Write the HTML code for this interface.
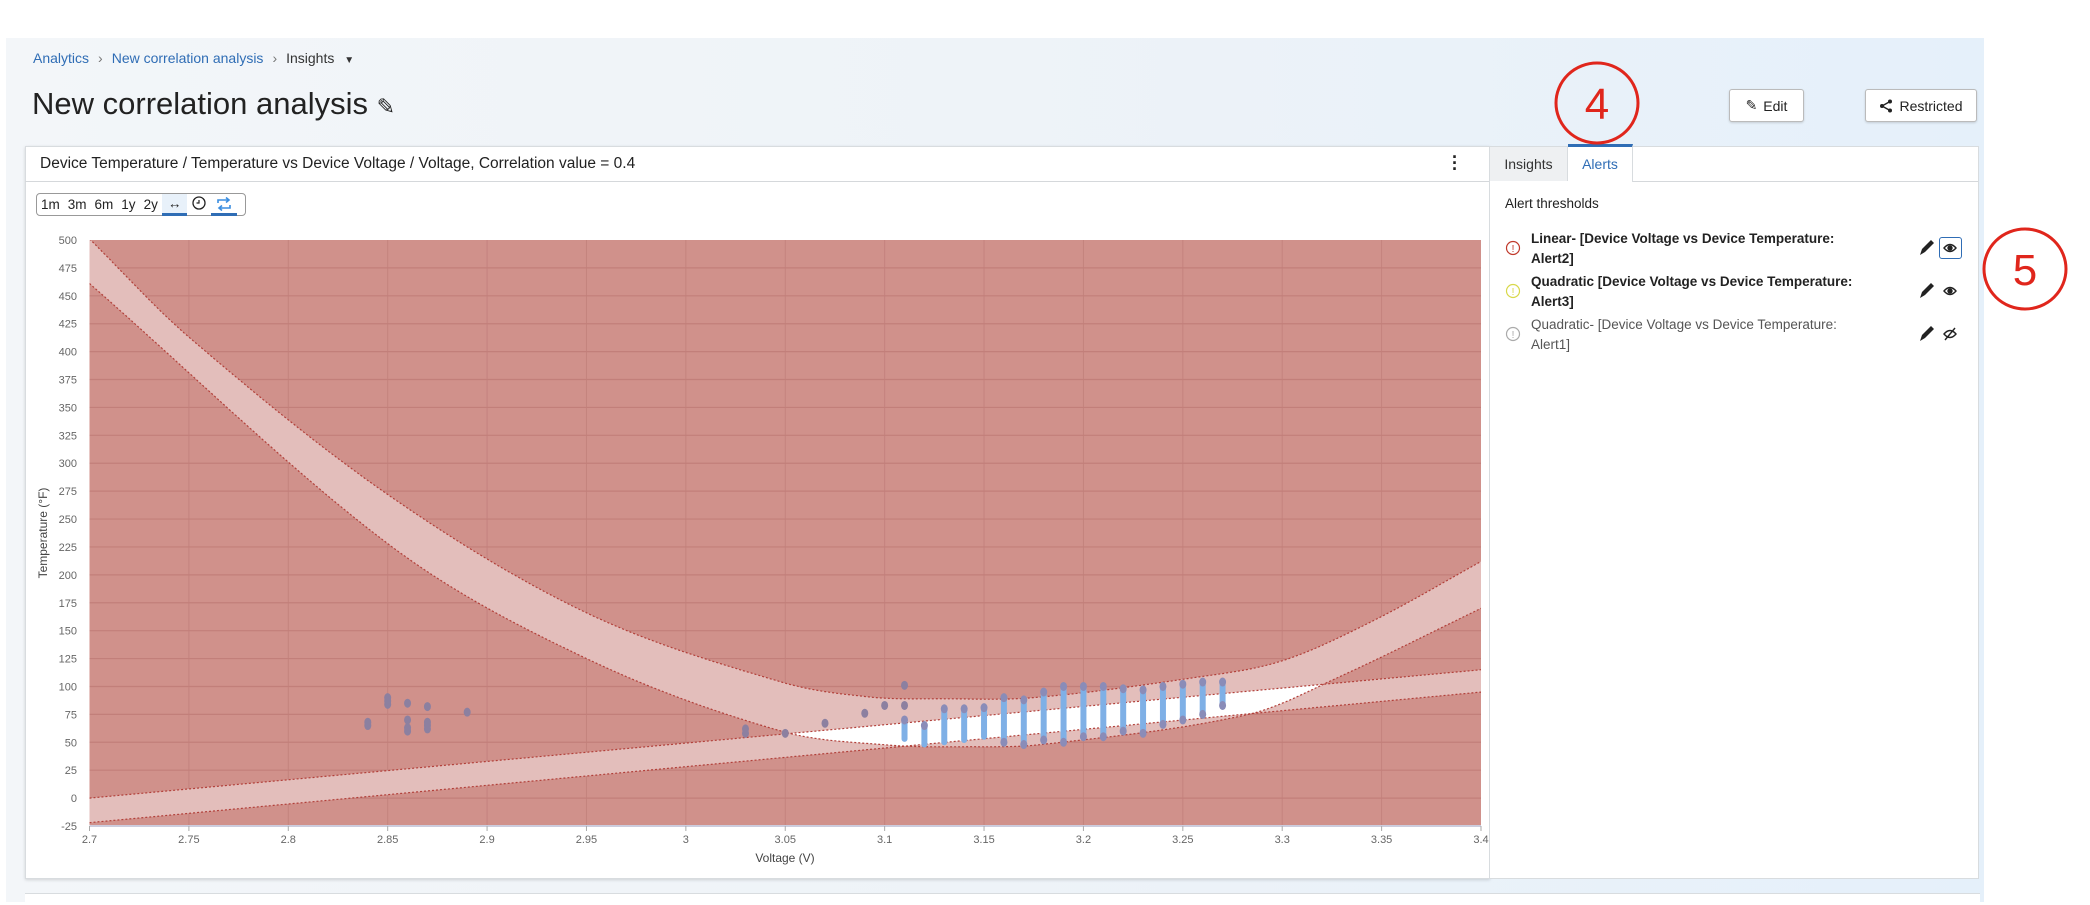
<!DOCTYPE html>
<html><head><meta charset="utf-8">
<style>
*{box-sizing:border-box;margin:0;padding:0}
body{width:2090px;height:902px;overflow:hidden;background:#fff;font-family:"Liberation Sans",sans-serif;color:#222;position:relative}
.bg{position:absolute;left:6px;top:38px;width:1978px;height:864px;background:linear-gradient(90deg,#f3f6f9 0%,#eef3f8 50%,#e5f0fa 100%)}
.abs{position:absolute}
.bc{left:33px;top:50px;font-size:14px;color:#333;white-space:nowrap}
.bc a{color:#2f6db5;text-decoration:none}
.bc .sep{color:#777;margin:0 9px}
.title{left:32px;top:86px;font-size:31px;font-weight:300;color:#222}
.btn{background:#fff;border:1px solid #bbb;border-radius:3px;font-size:14px;height:33px;display:flex;align-items:center;justify-content:center;gap:6px;box-shadow:0 1px 2px rgba(0,0,0,.15)}
.card{background:#fff;border:1px solid #d8dcdf}
.tb{left:36px;top:193px;width:210px;height:23px;border:1px solid #999;border-radius:4px;background:#fff;font-size:13.5px;display:flex;align-items:center}
.tb span{padding:0 4px}
</style></head><body>
<div class="bg"></div>
<div class="abs bc"><a>Analytics</a><span class="sep">&#x203A;</span><a>New correlation analysis</a><span class="sep">&#x203A;</span>Insights <span style="font-size:10px;margin-left:6px">&#9660;</span></div>
<div class="abs title">New correlation analysis <span style="font-size:22px">&#x270E;</span></div>

<div class="abs btn" style="left:1729px;top:89px;width:75px"><span>&#x270E;</span>Edit</div>
<div class="abs btn" style="left:1865px;top:89px;width:112px">
<svg width="14" height="14" viewBox="0 0 14 14"><circle cx="11" cy="2.5" r="2" fill="#222"/><circle cx="3" cy="7" r="2" fill="#222"/><circle cx="11" cy="11.5" r="2" fill="#222"/><path d="M11 2.5L3 7L11 11.5" stroke="#222" stroke-width="1.4" fill="none"/></svg>Restricted</div>

<div class="abs card" style="left:25px;top:146px;width:1465px;height:733px;box-shadow:0 1px 3px rgba(0,0,0,.15)"></div>
<div class="abs" style="left:25px;top:181px;width:1465px;height:1px;background:#d5d8db"></div>
<div class="abs" style="left:40px;top:155px;font-size:15.5px;color:#222">Device Temperature / Temperature vs Device Voltage / Voltage, Correlation value = 0.4</div>
<div class="abs" style="left:1452px;top:154px;font-size:18px;font-weight:bold;line-height:6px">·<br>·<br>·</div>
<div class="abs tb"><span>1m</span><span>3m</span><span>6m</span><span>1y</span><span>2y</span>
<span style="background:#e8f1fa;border-bottom:3px solid #2f6db5;height:22px;line-height:19px;padding:0 6px">&#x2194;</span>
<span style="padding:0 5px"><svg width="14" height="14"><circle cx="7" cy="7" r="6" stroke="#222" stroke-width="1.3" fill="none"/><path d="M7 4V7H4.5" stroke="#222" stroke-width="1.2" fill="none"/></svg></span>
<span style="border-bottom:3px solid #2f6db5;height:22px;padding:3px 5px 0"><svg width="16" height="14"><path d="M2 6V3H13M10 0.5L13 3L10 5.5M14 8V11H3M6 8.5L3 11L6 13.5" stroke="#3b8ee0" stroke-width="1.6" fill="none"/></svg></span>
</div>

<svg class="abs" style="left:0;top:0" width="1490" height="880" id="ch" font-family="Liberation Sans, sans-serif"></svg>

<div class="abs card" style="left:1489px;top:146px;width:490px;height:733px"></div>
<div class="abs" style="left:1490px;top:147px;width:78px;height:34px;background:#eef0f2;border-right:1px solid #d8dcdf;font-size:14px;text-align:center;line-height:34px;color:#333">Insights</div>
<div class="abs" style="left:1568px;top:144px;width:65px;height:38px;background:#fff;border-top:3px solid #2f6db5;border-right:1px solid #d8dcdf;font-size:14px;text-align:center;line-height:34px;color:#2f6db5">Alerts</div>
<div class="abs" style="left:1633px;top:181px;width:345px;height:1px;background:#d5d8db"></div>
<div class="abs" style="left:1505px;top:196px;font-size:13.5px;color:#222">Alert thresholds</div>

<div class="abs" style="left:1531px;top:229px;font-size:13.5px;font-weight:bold;line-height:19.5px;color:#222">Linear- [Device Voltage vs Device Temperature:<br>Alert2]</div>
<div class="abs" style="left:1531px;top:272px;font-size:13.5px;font-weight:bold;line-height:19.5px;color:#222">Quadratic [Device Voltage vs Device Temperature:<br>Alert3]</div>
<div class="abs" style="left:1531px;top:315px;font-size:13.5px;line-height:19.5px;color:#555">Quadratic- [Device Voltage vs Device Temperature:<br>Alert1]</div>
<svg class="abs" style="left:1505px;top:235px" width="16" height="120">
<circle cx="8" cy="13" r="6.5" fill="none" stroke="#c0392b" stroke-width="1.2"/><text x="8" y="17" font-size="10" text-anchor="middle" fill="#c0392b">!</text>
<circle cx="8" cy="56" r="6.5" fill="none" stroke="#d8d84a" stroke-width="1.2"/><text x="8" y="60" font-size="10" text-anchor="middle" fill="#d8d84a">!</text>
<circle cx="8" cy="99" r="6.5" fill="none" stroke="#aaa" stroke-width="1.2"/><text x="8" y="103" font-size="10" text-anchor="middle" fill="#aaa">!</text>
</svg>
<div class="abs" style="left:1939px;top:237px;width:23px;height:22px;border:1px solid #2f6db5;border-radius:3px"></div>
<svg class="abs" style="left:1915px;top:236px" width="50" height="110">
<g fill="#222">
<path d="M5 19L7 13L16 4L19 7L10 16Z"/><path d="M5 62L7 56L16 47L19 50L10 59Z"/><path d="M5 105L7 99L16 90L19 93L10 102Z"/>
</g>
<g stroke="#222" stroke-width="1.4" fill="none">
<path d="M29 12Q35 5 41 12Q35 19 29 12Z"/><circle cx="35" cy="12" r="2" fill="#222"/>
<path d="M29 55Q35 48 41 55Q35 62 29 55Z"/><circle cx="35" cy="55" r="2" fill="#222"/>
<path d="M29 98Q35 91 41 98Q35 105 29 98Z"/><path d="M30 104L40 92"/>
</g></svg>

<div class="abs" style="left:25px;top:893px;width:1955px;height:12px;background:#fff;border-top:1px solid #d8dcdf"></div>

<svg class="abs" style="left:0;top:0" width="2090" height="902">
<ellipse cx="1597" cy="103" rx="41" ry="40" fill="none" stroke="#e0261c" stroke-width="3"/>
<text x="1597" y="119" font-size="44" text-anchor="middle" fill="#e0261c" font-family="Liberation Sans">4</text>
<ellipse cx="2025" cy="269" rx="41" ry="40" fill="none" stroke="#e0261c" stroke-width="3"/>
<text x="2025" y="285" font-size="44" text-anchor="middle" fill="#e0261c" font-family="Liberation Sans">5</text>
</svg>

<script>
var X0=89.5,X1=1481,Y0=240,Y1=826;
function px(v){return X0+(v-2.7)/0.7*(X1-X0)}
function py(t){return Y1-(t+25)/525*(Y1-Y0)}
function spline(pts){return function(v){
 var n=pts.length;if(v<=pts[0][0])return pts[0][1];if(v>=pts[n-1][0])return pts[n-1][1];
 var i=0;while(pts[i+1][0]<v)i++;
 function m(k){var a=pts[Math.max(k-1,0)],b=pts[Math.min(k+1,n-1)];return (b[1]-a[1])/(b[0]-a[0]);}
 var x0=pts[i][0],x1=pts[i+1][0],h=x1-x0,t=(v-x0)/h,y0=pts[i][1],y1=pts[i+1][1],m0=m(i)*h,m1=m(i+1)*h;
 var t2=t*t,t3=t2*t;return (2*t3-3*t2+1)*y0+(t3-2*t2+t)*m0+(-2*t3+3*t2)*y1+(t3-t2)*m1;}}
var qu=spline([[2.7,501],[2.75,413],[2.85,272],[2.95,166],[3.048,104],[3.093,90.5],[3.13,89],[3.175,90],[3.256,108],[3.3,123],[3.347,160],[3.4,212]]);
var ql=spline([[2.7,461],[2.85,228],[2.95,125],[3.048,60],[3.102,47.5],[3.14,46],[3.179,48],[3.283,75],[3.328,108],[3.4,170]]);
function lu(v){return 0+(v-2.7)/0.7*115}
function ll(v){return -22+(v-2.7)/0.7*117}
var s='<defs><clipPath id="pc"><rect x="'+X0+'" y="'+Y0+'" width="'+(X1-X0)+'" height="'+(Y1-Y0)+'"/></clipPath>';
function band(fu,fl){var a=[],b=[];for(var i=0;i<=280;i++){var v=2.7+i*0.0025;a.push(px(v).toFixed(1)+','+py(fu(v)).toFixed(1));b.unshift(px(v).toFixed(1)+','+py(fl(v)).toFixed(1));}return 'M'+a.join('L')+'L'+b.join('L')+'Z'}
function line(f){var a=[];for(var i=0;i<=280;i++){var v=2.7+i*0.0025;a.push(px(v).toFixed(1)+','+py(f(v)).toFixed(1));}return 'M'+a.join('L')}
var qb=band(qu,ql),lb=band(lu,ll);
s+='<clipPath id="lc"><path d="'+lb+'"/></clipPath></defs>';
s+='<g clip-path="url(#pc)"><rect x="'+X0+'" y="'+Y0+'" width="'+(X1-X0)+'" height="'+(Y1-Y0)+'" fill="#d0918b"/>';
for(var i=1;i<14;i++){var x=px(2.7+i*0.05);s+='<line x1="'+x+'" y1="'+Y0+'" x2="'+x+'" y2="'+Y1+'" stroke="#c4837e" stroke-width="1"/>';}
for(var t=0;t<=475;t+=25){var y=py(t);s+='<line x1="'+X0+'" y1="'+y+'" x2="'+X1+'" y2="'+y+'" stroke="#c27f7a" stroke-width="1.2"/>';}
s+='<path d="'+qb+'" fill="#e3bebb"/><path d="'+lb+'" fill="#e3bebb"/>';
s+='<path d="'+qb+'" fill="#fff" clip-path="url(#lc)"/>';
[qu,ql,lu,ll].forEach(function(f){s+='<path d="'+line(f)+'" fill="none" stroke="#b2403a" stroke-width="1.2" stroke-dasharray="2,2"/>'});
var dots=[[2.84,[65,68]],[2.85,[84,87,90]],[2.86,[60,63,70,85]],[2.87,[62,65,68,82]],[2.89,[77]],[3.03,[58,62]],[3.05,[58]],[3.07,[67]],[3.09,[76]],[3.10,[83]],[3.11,[101,83]]];
dots.forEach(function(d){d[1].forEach(function(t){s+='<ellipse cx="'+px(d[0])+'" cy="'+py(t)+'" rx="3.5" ry="4.5" fill="#8c80a0"/>'})});
var bars=[[3.11,53,70],[3.12,48,65],[3.13,50,80],[3.14,52,80],[3.15,55,81],[3.16,50,90],[3.17,48,88],[3.18,52,95],[3.19,50,100],[3.2,55,100],[3.21,55,100],[3.22,60,98],[3.23,58,97],[3.24,66,100],[3.25,70,102],[3.26,75,104],[3.27,83,104]];
bars.forEach(function(b){var x=px(b[0]);s+='<line x1="'+x+'" y1="'+py(b[1])+'" x2="'+x+'" y2="'+py(b[2])+'" stroke="#7fb0e6" stroke-width="6" stroke-linecap="round"/>';
s+='<ellipse cx="'+x+'" cy="'+py(b[2])+'" rx="3.5" ry="4.5" fill="#8a8cb8"/>';if(b[0]>3.15)s+='<ellipse cx="'+x+'" cy="'+py(b[1])+'" rx="3.5" ry="4.5" fill="#8a8cb8"/>';});
s+='</g>';
s+='<line x1="'+X0+'" y1="'+Y1+'" x2="'+X1+'" y2="'+Y1+'" stroke="#ccd" stroke-width="2"/>';
for(var t=-25;t<=500;t+=25){s+='<text x="77" y="'+(py(t)+4)+'" font-size="11" fill="#666" text-anchor="end">'+t+'</text>';}
var xl=['2.7','2.75','2.8','2.85','2.9','2.95','3','3.05','3.1','3.15','3.2','3.25','3.3','3.35','3.4'];
xl.forEach(function(l,i){var x=px(2.7+i*0.05);s+='<line x1="'+x+'" y1="'+Y1+'" x2="'+x+'" y2="'+(Y1+5)+'" stroke="#aaa"/><text x="'+x+'" y="843" font-size="11" fill="#666" text-anchor="middle">'+l+'</text>';});
s+='<text x="785" y="862" font-size="12" fill="#444" text-anchor="middle">Voltage (V)</text>';
s+='<text transform="translate(47,533) rotate(-90)" font-size="12" fill="#444" text-anchor="middle">Temperature (°F)</text>';
document.getElementById('ch').innerHTML=s;
</script>
</body></html>
